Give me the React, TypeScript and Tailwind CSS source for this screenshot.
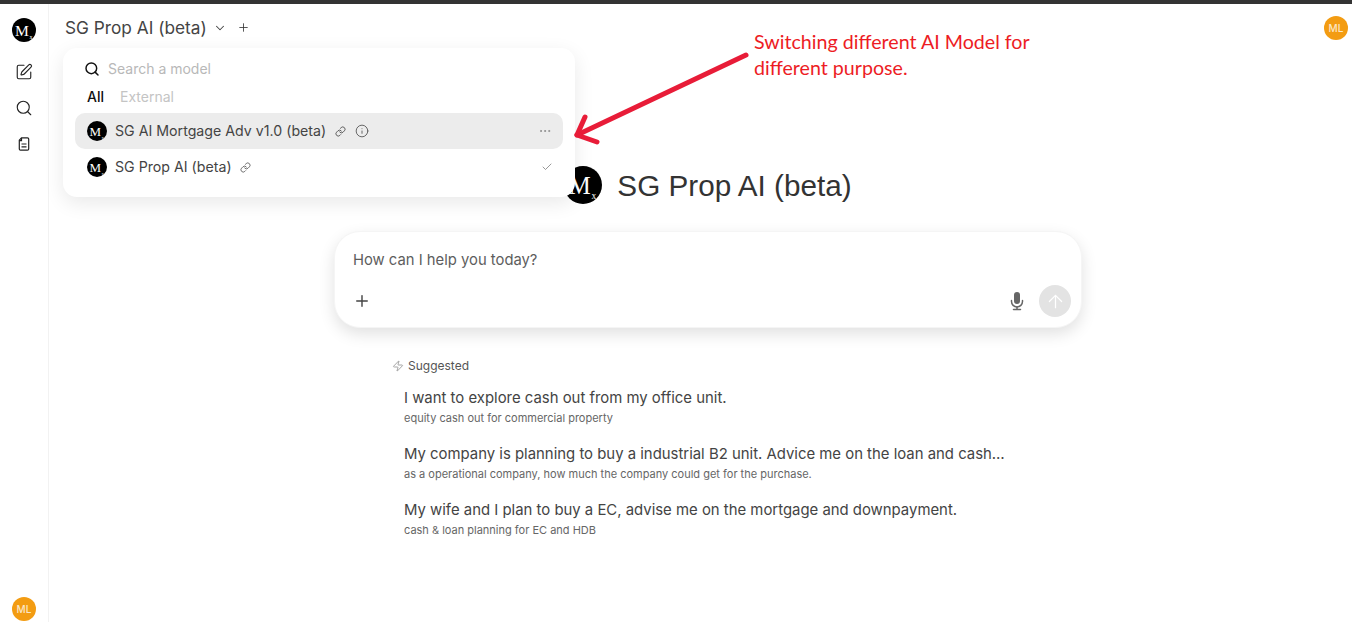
import { Check, ChevronDown, Ellipsis, Info, Link, Plus, Search, SquarePen, ArrowUp, Zap } from "lucide-react";

function Logo({ size }: { size: string }) {
  return (
    <div className={`${size} shrink-0 rounded-full bg-black flex items-center justify-center overflow-hidden`}>
      <svg viewBox="0 0 40 40" className="w-full h-full">
        <text x="5" y="29.5" fill="#fff" fontSize="26" fontFamily="'Liberation Serif', serif">M</text>
        <text x="29" y="35" fill="#fff" fontSize="10" fontFamily="'Liberation Serif', serif">x</text>
      </svg>
    </div>
  );
}

function Avatar() {
  return (
    <div className="w-6 h-6 rounded-full bg-[#f39c12] flex items-center justify-center text-[10px] font-medium text-[#fbe7c6]">
      ML
    </div>
  );
}

function NotesIcon() {
  return (
    <svg viewBox="0 0 16 16" fill="none" stroke="currentColor" strokeWidth="1.2" className="w-4 h-4">
      <path d="M5.5 1.8h6a1.2 1.2 0 0 1 1.2 1.2v10a1.2 1.2 0 0 1-1.2 1.2h-7A1.2 1.2 0 0 1 3.3 13V4.2z" />
      <path d="M5.5 8h5M5.5 10.8h5M5.5 2v2.6H3.3" />
    </svg>
  );
}

function MicIcon() {
  return (
    <svg viewBox="0 0 18 20" className="ml-auto h-5 w-[18px] text-[#666]" fill="none" stroke="currentColor">
      <rect x="6" y="1" width="6" height="12" rx="3" fill="currentColor" stroke="none" />
      <path d="M3.5 9.5v1a5.5 5.5 0 0 0 11 0v-1" strokeWidth="1.5" strokeLinecap="round" />
      <path d="M9 16v2.5M5.5 18.6h7" strokeWidth="1.5" strokeLinecap="round" />
    </svg>
  );
}

const suggestions = [
  { title: "I want to explore cash out from my office unit.", sub: "equity cash out for commercial property" },
  {
    title: "My company is planning to buy a industrial B2 unit. Advice me on the loan and cash…",
    sub: "as a operational company, how much the company could get for the purchase.",
  },
  { title: "My wife and I plan to buy a EC, advise me on the mortgage and downpayment.", sub: "cash & loan planning for EC and HDB" },
];

export default function App() {
  return (
    <div className="relative h-[622px] w-[1352px] overflow-hidden bg-white font-['Inter',sans-serif] text-[#333]">
      <div className="h-1 bg-[#333]" />
      <div className="flex h-[618px]">
        <aside className="flex w-[49px] shrink-0 flex-col items-center border-r border-[#f2f2f2] pt-[14px]">
          <Logo size="w-6 h-6" />
          <div className="mt-[21px] flex flex-col items-center gap-[18px] text-[#222]">
            <SquarePen size={18} strokeWidth={1.5} />
            <Search size={18} strokeWidth={1.5} />
            <div className="pt-[1px]">
              <NotesIcon />
            </div>
          </div>
          <div className="mt-auto mb-[1px]">
            <Avatar />
          </div>
        </aside>

        <main className="flex-1 min-w-0">
          <header className="flex h-[48px] items-start pl-[16px] pr-[4px] pt-[12px]">
            <span className="text-[17.25px] leading-6 text-[#444]">SG Prop AI (beta)</span>
            <ChevronDown size={14} strokeWidth={1.8} className="ml-[6px] mt-[5px] text-[#444]" />
            <Plus size={13} strokeWidth={1.5} className="ml-[10px] mt-[5px] text-[#333]" />
            <div className="ml-auto">
              <Avatar />
            </div>
          </header>

          <section className="flex flex-col items-center pl-[15px] pt-[114px]">
            <div className="flex items-center gap-[15px]">
              <Logo size="w-[38px] h-[38px]" />
              <h1 className="pt-[1px] font-['Liberation_Sans',sans-serif] text-[29.7px] leading-9 text-[#333]">SG Prop AI (beta)</h1>
            </div>

            <div className="mt-[27px] w-[748px] rounded-[26px] border border-[#f5f5f5] bg-white px-[18px] pt-[18px] pb-[10px] shadow-[0_6px_16px_rgba(0,0,0,0.12)]">
              <div className="text-[14.8px] leading-5 text-[#5d5d5d]">How can I help you today?</div>
              <div className="mt-[15px] flex items-center">
                <Plus size={18} strokeWidth={1.9} className="text-[#444]" />
                <MicIcon />
                <div className="ml-[13px] -mr-[8px] flex h-8 w-8 items-center justify-center rounded-full bg-[#e3e3e3] text-white">
                  <ArrowUp size={21} strokeWidth={1.4} />
                </div>
              </div>
            </div>

            <div className="mt-[30px] w-[630px]">
              <div className="-ml-[1px] flex items-center gap-[4px] text-xs leading-4 text-[#555]">
                <Zap size={12} strokeWidth={1.5} className="text-[#888]" />
                Suggested
              </div>
              <div className="mt-[14px] flex flex-col gap-[16px] pl-[11px]">
                {suggestions.map((s) => (
                  <div key={s.sub} className="w-[606px]">
                    <div className="text-[14.9px] leading-5 whitespace-nowrap text-[#444]">{s.title}</div>
                    <div className="text-[11px] leading-5 text-[#666]">{s.sub}</div>
                  </div>
                ))}
              </div>
            </div>
          </section>
        </main>
      </div>

      {/* model dropdown */}
      <div className="absolute left-[63px] top-[48px] w-[512px] rounded-[14px] bg-white pl-[12px] pr-[12px] pt-[10px] pb-[12px] shadow-[0_6px_20px_rgba(0,0,0,0.09)]">
        <div className="flex h-[22px] items-center gap-[8px] pl-[9px]">
          <Search size={16} strokeWidth={2.2} className="text-[#111]" />
          <span className="text-sm text-[#b8b8b8]">Search a model</span>
        </div>
        <div className="mt-[7px] flex h-5 items-center gap-[16px] pl-[12px] text-sm">
          <span className="font-medium text-[#111]">All</span>
          <span className="text-[#c4c4c4]">External</span>
        </div>
        <div className="mt-[6px] flex h-[36px] items-center rounded-[10px] bg-[#ececec] pl-[12px] pr-[11px]">
          <Logo size="w-5 h-5" />
          <span className="ml-[8px] text-[14.2px] text-[#444]">SG AI Mortgage Adv v1.0 (beta)</span>
          <Link size={11} strokeWidth={1.8} className="ml-[9px] text-[#444]" />
          <Info size={14} strokeWidth={1.5} className="ml-[9px] text-[#555]" />
          <Ellipsis size={14} strokeWidth={1.5} className="ml-auto text-[#888]" />
        </div>
        <div className="flex h-[36px] items-center pl-[12px] pr-[10px]">
          <Logo size="w-5 h-5" />
          <span className="ml-[8px] text-[14.2px] text-[#444]">SG Prop AI (beta)</span>
          <Link size={11} strokeWidth={1.8} className="ml-[8px] text-[#555]" />
          <Check size={12} strokeWidth={1.5} className="ml-auto text-[#777]" />
        </div>
      </div>

      {/* annotation */}
      <div className="absolute left-[754px] top-[29px] font-['Lato',sans-serif] text-[19.65px] leading-[26px] text-[#ed1c24]">
        Switching different AI Model for
        <br />
        different purpose.
      </div>
      <svg className="absolute left-[570px] top-[50px]" width="180" height="100" viewBox="0 0 180 100" fill="none">
        <path d="M176 5 L7 85" stroke="#e81c38" strokeWidth="5" strokeLinecap="round" />
        <path d="M15 67 L7 85 L27 92" stroke="#e81c38" strokeWidth="5" strokeLinecap="round" strokeLinejoin="round" />
      </svg>
    </div>
  );
}
